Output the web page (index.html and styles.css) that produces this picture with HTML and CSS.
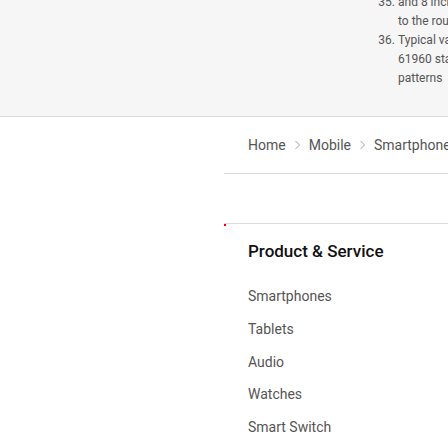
FILE: index.html
```html
<!DOCTYPE html>
<html lang="en">
<head>
<meta charset="utf-8">
<title>Samsung footer</title>
<link rel="stylesheet" href="styles.css">
</head>
<body>
<div class="page">
  <section class="notes">
    <ol class="notes-list" start="35">
      <li class="note">
        <span class="line">and 8 inches tall, subject to change</span>
        <span class="line">to the round up of measured values</span>
      </li>
      <li class="note">
        <span class="line">Typical value tested under third-party IEC</span>
        <span class="line">61960 standard. Actual results vary by usage</span>
        <span class="line">patterns</span>
      </li>
    </ol>
  </section>
  <div class="main">
    <div class="spacer"></div>
    <div class="content">
      <nav class="breadcrumb">
        <a class="crumb" href="#">Home</a>
        <svg class="chev" viewBox="0 0 5 10" width="5" height="10"><path d="M0.5 1 L4.5 5 L0.5 9" fill="none" stroke="#a0a0a0" stroke-width="1"/></svg>
        <a class="crumb" href="#">Mobile</a>
        <svg class="chev" viewBox="0 0 5 10" width="5" height="10"><path d="M0.5 1 L4.5 5 L0.5 9" fill="none" stroke="#a0a0a0" stroke-width="1"/></svg>
        <a class="crumb" href="#">Smartphones</a>
      </nav>
      <div class="blank-row"></div>
      <section class="menu">
        <span class="focus-dot"></span>
        <h2 class="menu-title">Product &amp; Service</h2>
        <ul class="menu-list">
          <li><a href="#">Smartphones</a></li>
          <li><a href="#">Tablets</a></li>
          <li><a href="#">Audio</a></li>
          <li><a href="#">Watches</a></li>
          <li><a href="#">Smart Switch</a></li>
        </ul>
      </section>
    </div>
  </div>
</div>
</body>
</html>
```
FILE: styles.css
```css
html, body {
  margin: 0;
  padding: 0;
  background: #fff;
  overflow: hidden;
}
body {
  font-family: Roboto, "Noto Sans", sans-serif;
  color: #555;
}
.page {
  width: 448px;
  overflow: hidden;
}
.notes {
  height: 116px;
  background: #f6f6f6;
  border-bottom: 1px solid #dcdcdc;
  overflow: hidden;
}
.notes-list {
  margin: -7.5px 0 0 0;
  padding: 0 0 0 398px;
  width: 400px;
  font-size: 12px;
  line-height: 19px;
  color: #555;
}
.note {
  white-space: nowrap;
}
.line {
  display: block;
}
.main {
  display: flex;
}
.spacer {
  width: 224px;
  flex: none;
}
.content {
  flex: 1;
  min-width: 0;
}
.breadcrumb {
  display: flex;
  align-items: center;
  gap: 9px;
  height: 56px;
  padding: 0 0 0 24px;
  border-bottom: 1px solid #dcdcdc;
  white-space: nowrap;
  font-size: 14px;
}
.crumb {
  color: #555;
  text-decoration: none;
}
.chev {
  flex: none;
}
.blank-row {
  height: 49px;
  border-bottom: 1px solid #dcdcdc;
}
.menu {
  position: relative;
  padding: 0 0 0 24px;
}
.focus-dot {
  position: absolute;
  left: 0;
  top: 0;
  width: 2px;
  height: 2px;
  background: #f00;
}
.menu-title {
  margin: 0;
  padding-top: 15px;
  font-size: 17px;
  line-height: 24px;
  font-weight: 500;
  color: #111;
}
.menu-list {
  list-style: none;
  margin: 0;
  padding: 23px 0 0 0;
}
.menu-list li {
  font-size: 14px;
  line-height: 20px;
  margin-bottom: 12.75px;
}
.menu-list a {
  color: #555;
  text-decoration: none;
}
```
